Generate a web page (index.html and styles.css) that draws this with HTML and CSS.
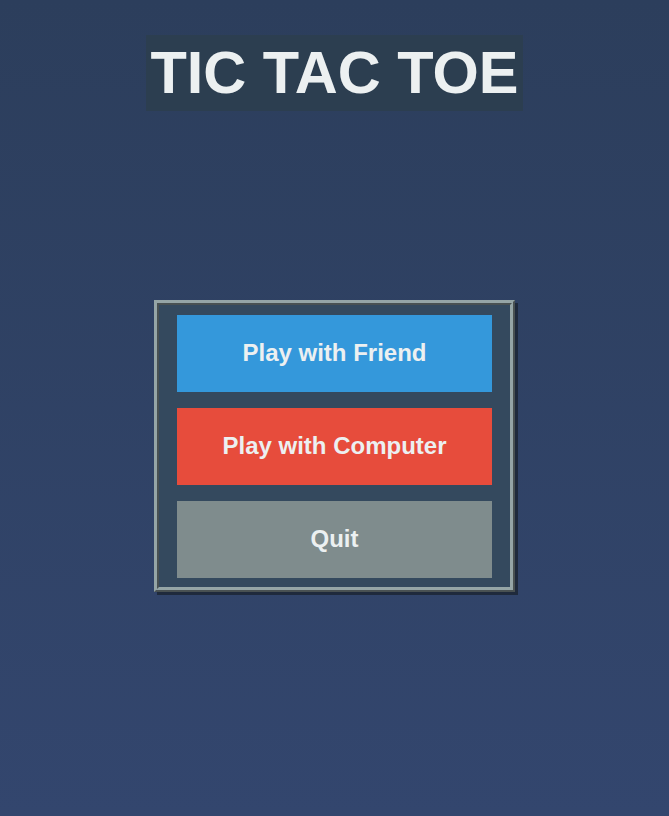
FILE: index.html
```html
<!DOCTYPE html>
<html>
<head>
<meta charset="utf-8">
<link rel="stylesheet" href="styles.css">
</head>
<body>
<div class="page">
  <h1 class="title">TIC TAC TOE</h1>
  <div class="menu">
    <button class="btn btn-friend">Play with Friend</button>
    <button class="btn btn-computer">Play with Computer</button>
    <button class="btn btn-quit">Quit</button>
  </div>
</div>
</body>
</html>
```
FILE: styles.css
```css
html, body {
  margin: 0;
  padding: 0;
  height: 100%;
}
body {
  background: linear-gradient(to bottom, #2c3e5c, #33466e);
  font-family: "Liberation Sans", Arial, sans-serif;
}
.page {
  display: flex;
  flex-direction: column;
  align-items: center;
  padding-top: 35px;
}
.title {
  margin: 0;
  background: #2c3e50;
  color: #ecf0f1;
  font-size: 59.5px;
  font-weight: bold;
  line-height: 76px;
  padding: 0 4px;
}
.menu {
  margin-top: 189px;
  background: #34495e;
  border: 5px ridge #95a5a6;
  box-shadow: 3px 3px 0 #1f2a3c;
  padding: 10px 18px 9px 18px;
  display: flex;
  flex-direction: column;
  gap: 16px;
}
.btn {
  width: 315px;
  height: 77px;
  border: none;
  color: #ecf0f1;
  font-family: "Liberation Sans", Arial, sans-serif;
  font-size: 24px;
  font-weight: bold;
  padding: 0 0 2px 0;
}
.btn-friend { background: #3498db; }
.btn-computer { background: #e74c3c; }
.btn-quit { background: #7f8c8d; }
```
